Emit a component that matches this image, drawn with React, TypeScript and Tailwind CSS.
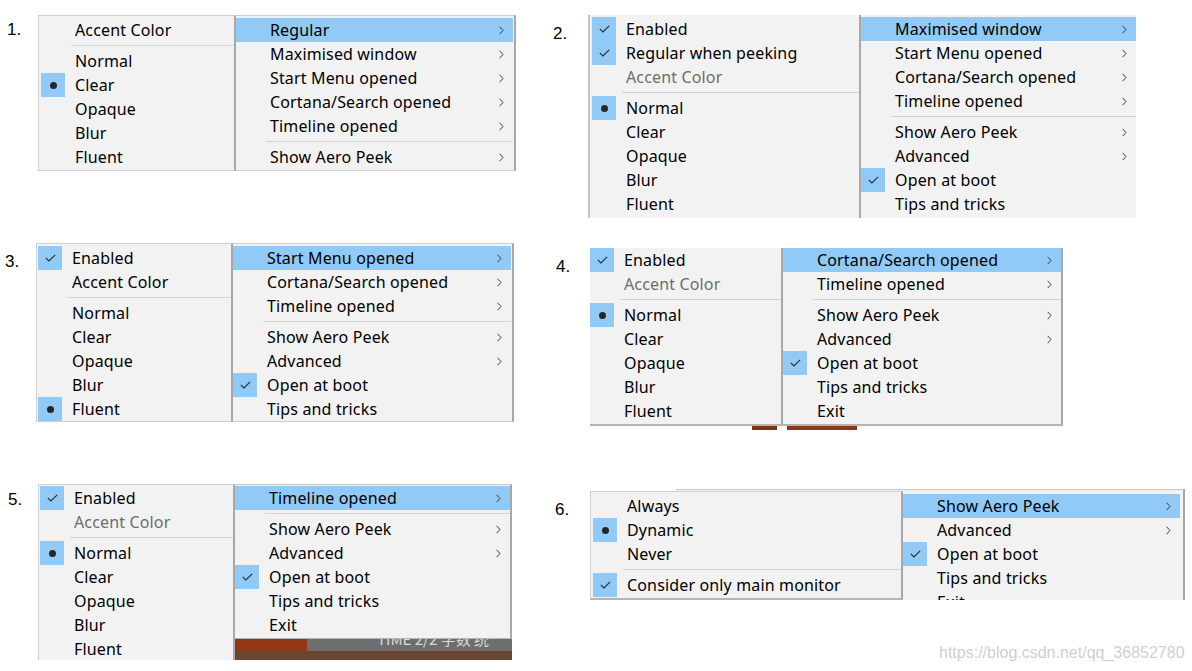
import React from "react";

type Item = {
  label?: string;
  sep?: boolean;
  mark?: "check" | "dot";
  hl?: boolean;
  chev?: boolean;
  dis?: boolean;
};

function Check() {
  return (
    <svg width="11" height="8" viewBox="0 0 11 8" fill="none">
      <path d="M0.8 3.8 L3.9 6.9 L10.2 0.8" stroke="#2b2b2b" strokeWidth="1.1" />
    </svg>
  );
}

function Dot() {
  return <div className="h-[7px] w-[7px] rounded-full bg-[#262626]" />;
}

function Chevron() {
  return (
    <svg width="5" height="9" viewBox="0 0 5 9" fill="none">
      <path d="M0.6 0.8 L4 4.5 L0.6 8.2" stroke="#3c3c3c" strokeWidth="1" />
    </svg>
  );
}

function Row({ item }: { item: Item }) {
  if (item.sep) {
    return (
      <div className="h-[7px] pl-[30px] pt-[3px]">
        <div className="h-px w-full bg-[#d4d4d4]" />
      </div>
    );
  }
  return (
    <div className={"flex h-[24px] items-center " + (item.hl ? "bg-[#91c9f7]" : "")}>
      <div
        className={
          "flex h-[24px] w-[24px] shrink-0 items-center justify-center " +
          (item.mark ? "bg-[#91c9f7]" : "")
        }
      >
        {item.mark === "check" ? <Check /> : item.mark === "dot" ? <Dot /> : null}
      </div>
      <span
        className={
          "ml-[10px] flex-1 whitespace-nowrap text-[16px] leading-[24px] tracking-[0.15px] " +
          (item.dis ? "text-[#6d6d6d]" : "text-black")
        }
      >
        {item.label}
      </span>
      {item.chev ? (
        <div className="flex h-[24px] w-[24px] shrink-0 items-center justify-center">
          <Chevron />
        </div>
      ) : null}
    </div>
  );
}

function Rows({ items }: { items: Item[] }) {
  return (
    <>
      {items.map((it, i) => (
        <Row key={i} item={it} />
      ))}
    </>
  );
}

const S: Item = { sep: true };

const accentBlock = (dotIndex: number, accentDisabled: boolean, enabled: boolean, regularPeek = false): Item[] => {
  const out: Item[] = [];
  if (enabled) out.push({ label: "Enabled", mark: "check" });
  if (regularPeek) out.push({ label: "Regular when peeking", mark: "check" });
  out.push({ label: "Accent Color", dis: accentDisabled });
  out.push(S);
  ["Normal", "Clear", "Opaque", "Blur", "Fluent"].forEach((l, i) => {
    out.push(i === dotIndex ? { label: l, mark: "dot" } : { label: l });
  });
  return out;
};

function Num({ n }: { n: string }) {
  return (
    <span className="block text-[17px] leading-[17px] text-black [font-family:'Liberation_Sans',Arial,sans-serif]">
      {n}
    </span>
  );
}

export default function App() {
  return (
    <div className="flex h-[671px] w-[1192px] flex-col overflow-hidden bg-white [font-family:'Noto_Sans',sans-serif]">
      {/* Row 1 */}
      <div className="mt-[15px] flex h-[203px] items-start">
        <div className="w-[38px] shrink-0 pl-[7px] pt-[6px]">
          <Num n="1." />
        </div>
        <div className="h-[156px] w-[198px] shrink-0 border-b border-l border-r-2 border-t border-b-[#cfcfcf] border-l-[#cfcfcf] border-r-[#a8a8a8] border-t-[#cfcfcf] bg-[#f2f2f2] pl-[2px] pt-[2px]">
          <Rows items={[{ label: "Accent Color" }, S, { label: "Normal" }, { label: "Clear", mark: "dot" }, { label: "Opaque" }, { label: "Blur" }, { label: "Fluent" }]} />
        </div>
        <div className="h-[156px] w-[280px] shrink-0 border-b border-r-2 border-t border-b-[#cfcfcf] border-r-[#a8a8a8] border-t-[#cfcfcf] bg-[#f2f2f2] pr-[1px] pt-[2px]">
          <Rows
            items={[
              { label: "Regular", hl: true, chev: true },
              { label: "Maximised window", chev: true },
              { label: "Start Menu opened", chev: true },
              { label: "Cortana/Search opened", chev: true },
              { label: "Timeline opened", chev: true },
              S,
              { label: "Show Aero Peek", chev: true },
            ]}
          />
        </div>
        <div className="w-[72px] shrink-0 pl-[37px] pt-[10px]">
          <Num n="2." />
        </div>
        <div className="h-[203px] w-[273px] shrink-0 border-l-2 border-r-2 border-l-[#c4c4c4] border-r-[#a8a8a8] bg-[#f2f2f2] pl-[2px] pt-[2px]">
          <Rows items={accentBlock(0, true, true, true)} />
        </div>
        <div className="h-[203px] w-[275px] shrink-0 bg-[#f2f2f2] pt-[2px]">
          <Rows
            items={[
              { label: "Maximised window", hl: true, chev: true },
              { label: "Start Menu opened", chev: true },
              { label: "Cortana/Search opened", chev: true },
              { label: "Timeline opened", chev: true },
              S,
              { label: "Show Aero Peek", chev: true },
              { label: "Advanced", chev: true },
              { label: "Open at boot", mark: "check" },
              { label: "Tips and tricks" },
            ]}
          />
        </div>
      </div>

      {/* Row 2 */}
      <div className="mt-[25px] flex h-[187px] items-start">
        <div className="w-[36px] shrink-0 pl-[5px] pt-[10px]">
          <Num n="3." />
        </div>
        <div className="h-[179px] w-[197px] shrink-0 border-b border-l border-r-2 border-t border-b-[#cfcfcf] border-l-[#cfcfcf] border-r-[#a8a8a8] border-t-[#cfcfcf] bg-[#f2f2f2] pl-[1px] pt-[2px]">
          <Rows items={accentBlock(4, false, true)} />
        </div>
        <div className="h-[179px] w-[281px] shrink-0 border-b border-r-2 border-t border-b-[#cfcfcf] border-r-[#a8a8a8] border-t-[#cfcfcf] bg-[#f2f2f2] pr-[1px] pt-[2px]">
          <Rows
            items={[
              { label: "Start Menu opened", hl: true, chev: true },
              { label: "Cortana/Search opened", chev: true },
              { label: "Timeline opened", chev: true },
              S,
              { label: "Show Aero Peek", chev: true },
              { label: "Advanced", chev: true },
              { label: "Open at boot", mark: "check" },
              { label: "Tips and tricks" },
            ]}
          />
        </div>
        <div className="w-[76px] shrink-0 pl-[42px] pt-[15px]">
          <Num n="4." />
        </div>
        <div className="mt-[5px] flex flex-col">
          <div className="flex">
            <div className="h-[178px] w-[193px] shrink-0 border-b-2 border-r-2 border-b-[#b4b4b4] border-r-[#a8a8a8] bg-[#f2f2f2]">
              <Rows items={accentBlock(0, true, true)} />
            </div>
            <div className="h-[178px] w-[280px] shrink-0 border-b-2 border-r-2 border-b-[#b4b4b4] border-r-[#a8a8a8] bg-[#f2f2f2]">
              <Rows
                items={[
                  { label: "Cortana/Search opened", hl: true, chev: true },
                  { label: "Timeline opened", chev: true },
                  S,
                  { label: "Show Aero Peek", chev: true },
                  { label: "Advanced", chev: true },
                  { label: "Open at boot", mark: "check" },
                  { label: "Tips and tricks" },
                  { label: "Exit" },
                ]}
              />
            </div>
          </div>
          <div className="flex h-[4px]">
            <div className="w-[162px]" />
            <div className="w-[25px] bg-[#7e3315]" />
            <div className="w-[10px]" />
            <div className="w-[70px] bg-[#8a3817]" />
          </div>
        </div>
      </div>

      {/* Row 3 */}
      <div className="mt-[54px] flex h-[187px] items-start">
        <div className="w-[38px] shrink-0 pl-[8px] pt-[7px]">
          <Num n="5." />
        </div>
        <div className="h-[176px] w-[197px] shrink-0 overflow-hidden border-l border-r-2 border-t border-l-[#cfcfcf] border-r-[#a8a8a8] border-t-[#cfcfcf] bg-[#f2f2f2] pl-[1px] pt-[1px]">
          <Rows items={accentBlock(0, true, true)} />
        </div>
        <div className="flex w-[277px] shrink-0 flex-col">
          <div className="h-[155px] border-b border-r-2 border-t border-b-[#b4b4b4] border-r-[#a8a8a8] border-t-[#c8c8c8] bg-[#f2f2f2] pt-[1px]">
            <Rows
              items={[
                { label: "Timeline opened", hl: true, chev: true },
                S,
                { label: "Show Aero Peek", chev: true },
                { label: "Advanced", chev: true },
                { label: "Open at boot", mark: "check" },
                { label: "Tips and tricks" },
                { label: "Exit" },
              ]}
            />
          </div>
          <div className="flex h-[12px]">
            <div className="w-[72px] bg-[#8f3716]" />
            <div className="flex-1 overflow-hidden bg-[#6e6e6e] pl-[70px]">
              <div className="-mt-[9px] whitespace-nowrap text-[15px] leading-[18px] text-[#d8d8d8] [font-family:'Noto_Sans_CJK_SC',sans-serif]">
                TIME 2/2 字数 统
              </div>
            </div>
          </div>
          <div className="h-[9px] bg-[#6a4530]" />
        </div>
        <div className="w-[78px] shrink-0 pl-[43px] pt-[17px]">
          <Num n="6." />
        </div>
        <div className="flex flex-col pt-[5px]">
          <div className="flex items-start">
            <div className="flex flex-col">
              <div className="ml-[86px] h-[2px] border-t border-t-[#c3ccd6] bg-[#eef1f4]" />
              <div className="h-[109px] w-[313px] shrink-0 border-b-2 border-l border-r-2 border-t border-b-[#b4b4b4] border-l-[#cfcfcf] border-r-[#a8a8a8] border-t-[#cfcfcf] bg-[#f2f2f2] pl-[2px] pt-[2px]">
                <Rows
                  items={[
                    { label: "Always" },
                    { label: "Dynamic", mark: "dot" },
                    { label: "Never" },
                    S,
                    { label: "Consider only main monitor", mark: "check" },
                  ]}
                />
              </div>
            </div>
            <div className="h-[111px] w-[282px] shrink-0 overflow-hidden border-r-2 border-t border-r-[#a8a8a8] border-t-[#c8c8c8] bg-[#f2f2f2] pr-[3px] pt-[4px]">
              <Rows
                items={[
                  { label: "Show Aero Peek", hl: true, chev: true },
                  { label: "Advanced", chev: true },
                  { label: "Open at boot", mark: "check" },
                  { label: "Tips and tricks" },
                  { label: "Exit" },
                ]}
              />
            </div>
          </div>
          <div className="mt-[44px] pl-[349px] text-[16px] leading-[18px] text-[#cfcfcf] [font-family:'Liberation_Sans',Arial,sans-serif]">
            https://blog.csdn.net/qq_36852780
          </div>
        </div>
      </div>
    </div>
  );
}
